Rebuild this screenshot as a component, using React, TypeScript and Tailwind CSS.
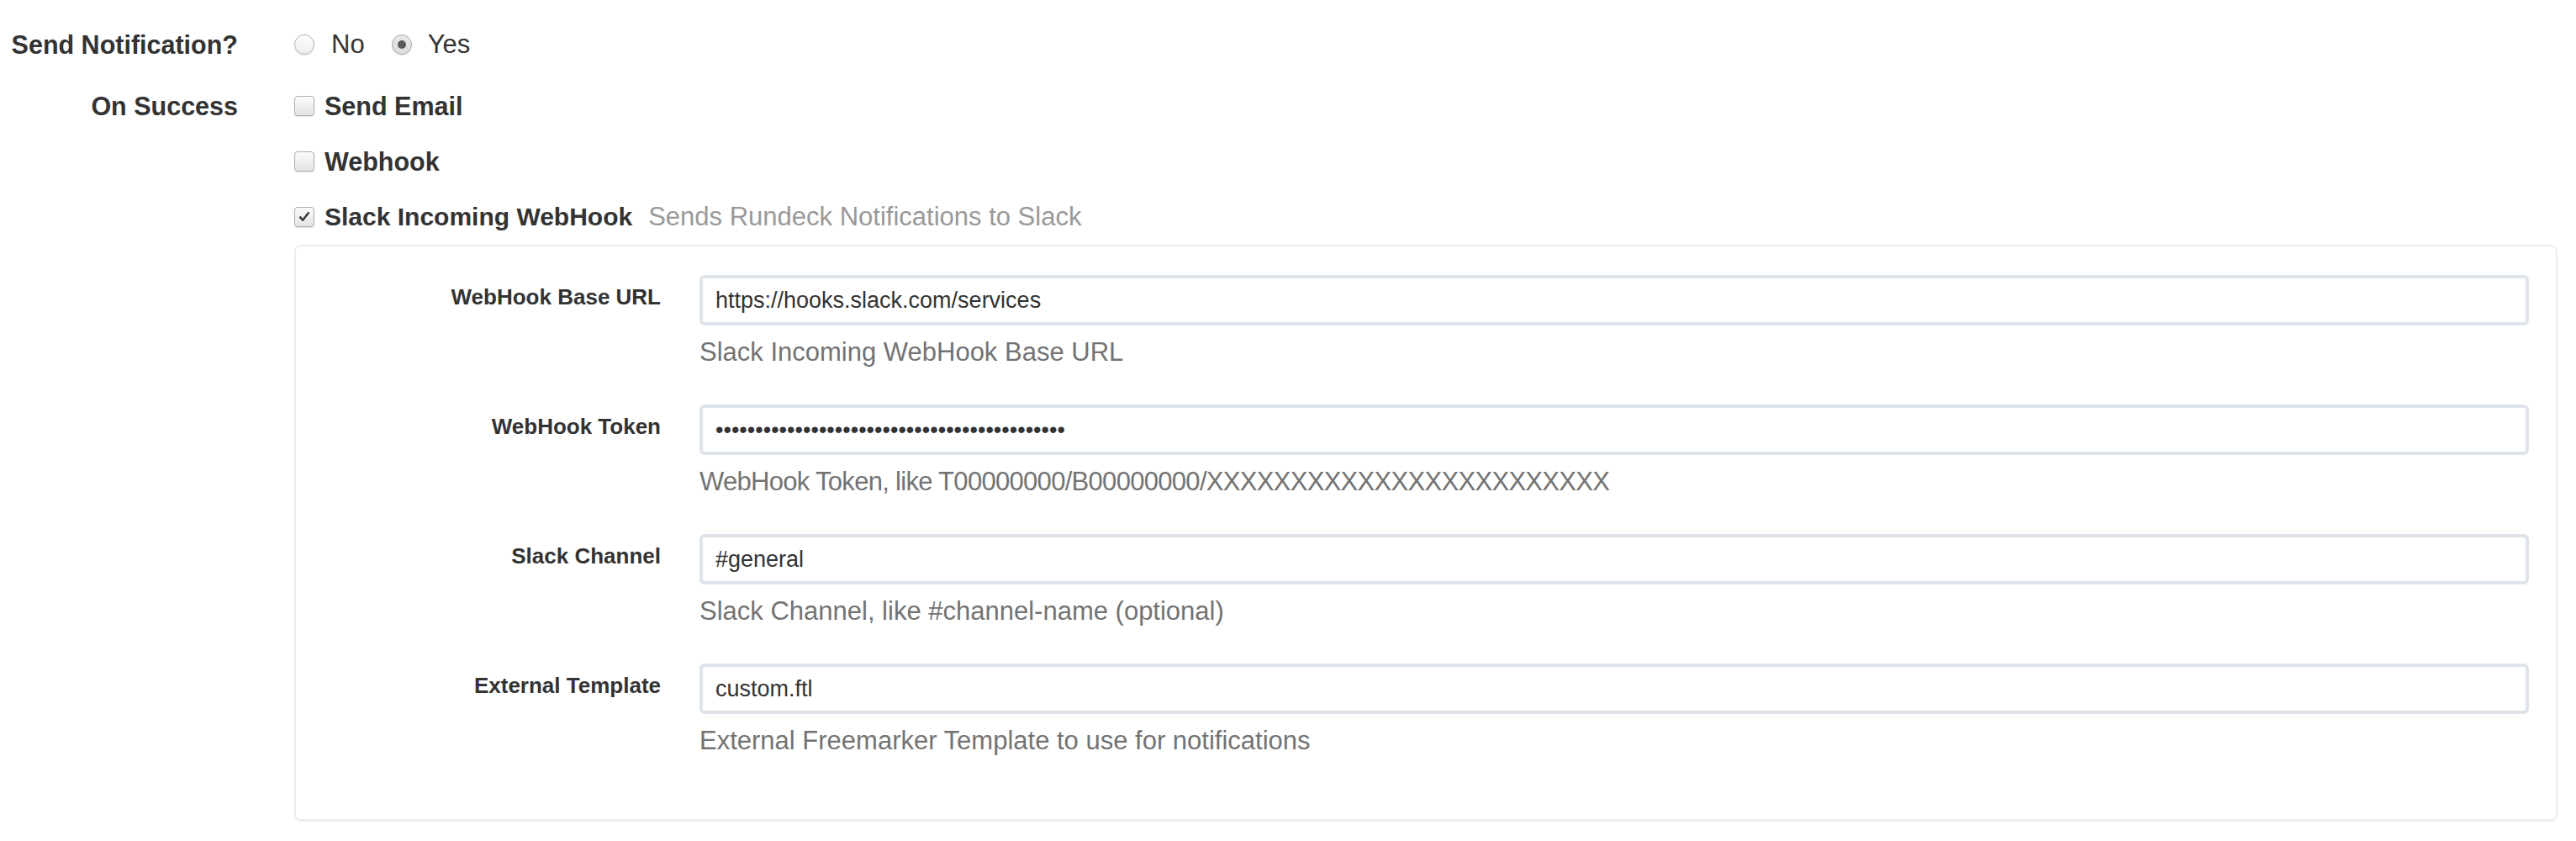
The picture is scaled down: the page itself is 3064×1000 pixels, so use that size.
import React from 'react';

interface Field {
  label: string;
  value: string;
  help: string;
  type?: string;
  helpClass?: string;
}

const fields: Field[] = [
  {
    label: 'WebHook Base URL',
    value: 'https://hooks.slack.com/services',
    help: 'Slack Incoming WebHook Base URL',
  },
  {
    label: 'WebHook Token',
    value: 'T00000000/B00000000/XXXXXXXXXXXXXXXXXXXXXXXX',
    help: 'WebHook Token, like T00000000/B00000000/XXXXXXXXXXXXXXXXXXXXXXXX',
    type: 'password',
    helpClass: 'tracking-[-0.7px]',
  },
  {
    label: 'Slack Channel',
    value: '#general',
    help: 'Slack Channel, like #channel-name (optional)',
  },
  {
    label: 'External Template',
    value: 'custom.ftl',
    help: 'External Freemarker Template to use for notifications',
  },
];

const Radio: React.FC<{ checked?: boolean }> = ({ checked }) => (
  <span
    className={
      'flex h-[24px] w-[24px] shrink-0 items-center justify-center rounded-full border-[1.5px] shadow-[0_1px_1px_rgba(0,0,0,0.12)] ' +
      (checked
        ? 'border-[#a8a8a8] bg-gradient-to-b from-[#e9e9e9] to-[#dcdcdc]'
        : 'border-[#b4b4b4] bg-gradient-to-b from-[#ffffff] to-[#ececec]')
    }
  >
    {checked && <span className="h-[10px] w-[10px] rounded-full bg-[#5a5a5a]" />}
  </span>
);

const Checkbox: React.FC<{ checked?: boolean }> = ({ checked }) => (
  <span className="flex h-[24px] w-[24px] shrink-0 items-center justify-center rounded-[4px] border-[1.5px] border-[#acacac] bg-gradient-to-b from-[#fbfbfb] to-[#e4e4e4] shadow-[0_1px_1px_rgba(0,0,0,0.12)]">
    {checked && (
      <svg viewBox="0 0 24 24" className="h-[18px] w-[18px]">
        <path d="M5.5 12.5l4 4.5L18.5 5.5" fill="none" stroke="#333" strokeWidth="3.2" strokeLinecap="round" strokeLinejoin="round" />
      </svg>
    )}
  </span>
);

const App: React.FC = () => {
  return (
    <div className="min-h-screen bg-white pt-[33px] font-['Liberation_Sans',Arial,sans-serif] text-[#333]">
      {/* Send Notification? */}
      <div className="flex">
        <div className="w-[283px] shrink-0 text-right text-[30.5px] font-bold leading-[40px]">Send Notification?</div>
        <div className="ml-[67px] flex items-center text-[31px] leading-[40px]">
          <Radio />
          <span className="ml-[20px]">No</span>
          <span className="ml-[32px]">
            <Radio checked />
          </span>
          <span className="ml-[19px]">Yes</span>
        </div>
      </div>

      {/* On Success */}
      <div className="mt-[33px] flex">
        <div className="w-[283px] shrink-0 text-right text-[30.5px] font-bold leading-[40px]">On Success</div>
        <div className="ml-[67px] flex-1 pr-[22px]">
          <div className="flex flex-col gap-[26px]">
            <label className="flex items-center text-[30.5px] font-bold leading-[40px]">
              <Checkbox />
              <span className="ml-[12px]">Send Email</span>
            </label>
            <label className="flex items-center text-[30.5px] font-bold leading-[40px]">
              <Checkbox />
              <span className="ml-[12px]">Webhook</span>
            </label>
            <label className="flex items-center leading-[40px]">
              <Checkbox checked />
              <span className="ml-[12px] text-[30px] font-bold">Slack Incoming WebHook</span>
              <span className="ml-[19px] text-[31px] text-[#999]">Sends Rundeck Notifications to Slack</span>
            </label>
          </div>

          <div className="mt-[13px] flex flex-col gap-[42px] rounded-[8px] border-2 border-[#ececec] pt-[34px] pr-[32px] pb-[73px] shadow-[0_2px_2px_rgba(0,0,0,0.04)]">
            {fields.map((f) => (
              <div key={f.label} className="flex items-start">
                <div className="w-[434px] shrink-0 pt-[10px] text-right text-[26px] font-bold leading-[32px] text-[#333]">
                  {f.label}
                </div>
                <div className="ml-[46px] flex-1">
                  <input
                    type={f.type || 'text'}
                    defaultValue={f.value}
                    readOnly
                    className="block h-[60px] w-full rounded-[6px] border-[4px] border-[#dfe4eb] bg-white px-[15px] text-[27px] text-[#333] outline-none"
                  />
                  <div className={'mt-[12px] text-[31px] leading-[40px] text-[#737373] ' + (f.helpClass || '')}>{f.help}</div>
                </div>
              </div>
            ))}
          </div>
        </div>
      </div>
    </div>
  );
};

export default App;
